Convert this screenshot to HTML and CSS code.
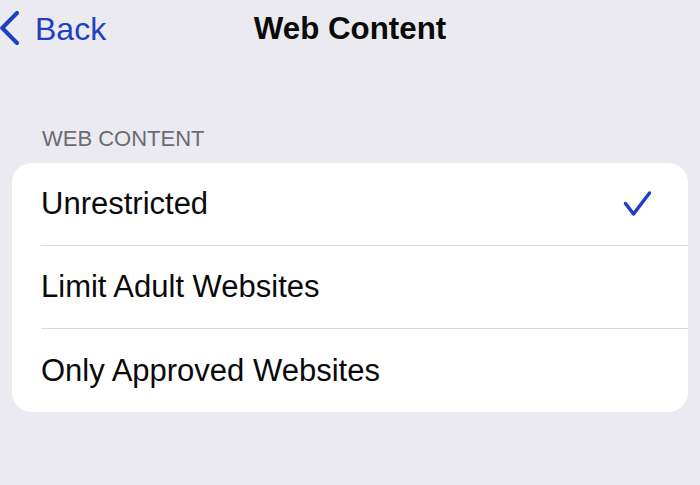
FILE: index.html
```html
<!DOCTYPE html>
<html lang="en">

<head>
    <meta charset="UTF-8">
    <meta name="viewport" content="width=device-width, initial-scale=1.0">
    <title>Web Content</title>
    <link rel="stylesheet" href="styles.css">
</head>

<body>
    <header class="nav-bar">
        <a class="back-link" href="#">
            <svg class="back-chevron" width="20" height="36" viewBox="0 0 20 36">
                <polyline points="17,2 2.2,17 17,32" />
            </svg>
            <span>Back</span>
        </a>
        <h1 class="nav-title">Web Content</h1>
        <div></div>
    </header>

    <main class="settings">
        <h2 class="section-title">WEB CONTENT</h2>

        <ul class="option-list">
            <li class="option-row">
                <span>Unrestricted</span>
                <svg class="check" width="32" height="28" viewBox="0 0 32 28">
                    <polyline points="3.5,13.5 11.5,24 27.5,3" />
                </svg>
            </li>
            <li class="option-row">
                <span>Limit Adult Websites</span>
            </li>
            <li class="option-row">
                <span>Only Approved Websites</span>
            </li>
        </ul>
    </main>
</body>
</html>
```

FILE: styles.css
```css
body {
    font-family: 'Liberation Sans', Arial, sans-serif;
    margin: 0;
    padding: 0;
    background-color: #ebeaf0;
    color: #0a0a0a;
    height: 485px;
    overflow: hidden;
}

.nav-bar {
    display: grid;
    grid-template-columns: 1fr auto 1fr;
    align-items: center;
    height: 58px;
}

.back-link {
    display: flex;
    align-items: center;
    gap: 15px;
    color: #1f3fc4;
    text-decoration: none;
    font-size: 32px;
}

.back-chevron polyline {
    fill: none;
    stroke: #1f3fc4;
    stroke-width: 4;
    stroke-linecap: round;
    stroke-linejoin: round;
}

.nav-title {
    margin: 0;
    font-size: 31.3px;
    font-weight: bold;
    color: #0a0a0a;
}

.settings {
    padding: 0 12px;
}

.section-title {
    margin: 68px 0 11px 30px;
    font-size: 22px;
    line-height: 26px;
    font-weight: normal;
    color: #6b6b70;
}

.option-list {
    list-style: none;
    margin: 0;
    padding: 0;
    background-color: #fff;
    border-radius: 20px;
    overflow: hidden;
}

.option-row {
    display: flex;
    justify-content: space-between;
    align-items: center;
    height: 83px;
    box-sizing: border-box;
    margin-left: 29px;
    padding-right: 34.5px;
    font-size: 31px;
    border-bottom: 1px solid #dadade;
}

.option-row:last-child {
    border-bottom: none;
}

.check polyline {
    fill: none;
    stroke: #1f3fc4;
    stroke-width: 3.5;
    stroke-linecap: round;
    stroke-linejoin: round;
}
```
